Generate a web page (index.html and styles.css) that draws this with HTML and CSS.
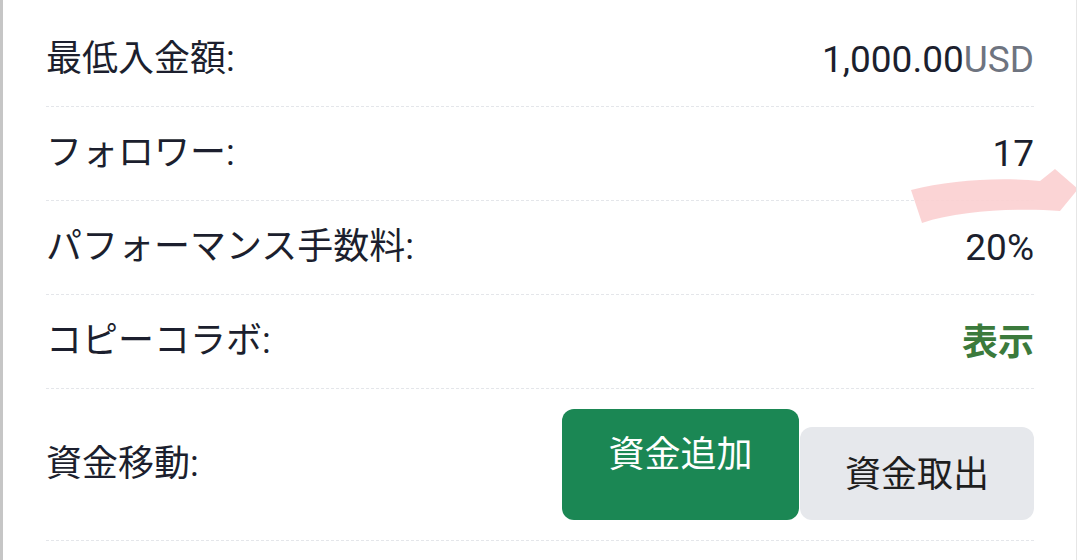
FILE: index.html
```html
<!DOCTYPE html>
<html lang="ja">
<head>
    <meta charset="UTF-8">
    <title>コピートレード詳細</title>
    <link rel="stylesheet" href="styles.css">
</head>
<body>
    <div class="card">
        <div class="row">
            <span class="label">最低入金額:</span>
            <span class="value">1,000.00<span class="unit">USD</span></span>
        </div>
        <div class="row">
            <span class="label">フォロワー:</span>
            <span class="value">17</span>
        </div>
        <div class="row">
            <span class="label">パフォーマンス手数料:</span>
            <span class="value">20%</span>
        </div>
        <div class="row">
            <span class="label">コピーコラボ:</span>
            <span class="value link">表示</span>
        </div>
        <div class="row row-funds">
            <span class="label">資金移動:</span>
            <div class="btn-group">
                <button class="btn btn-add">資金追加</button>
                <button class="btn btn-out">資金取出</button>
            </div>
        </div>

        <!-- 手書きのマーカー -->
        <svg class="marker" width="180" height="70" viewBox="900 160 180 70">
            <path d="M911,190 C950,180 1000,177 1040,181 L1055,169 L1078,189 L1060,211 C1020,208 960,210 922,223 Z" fill="#fbcfd0" opacity="0.9"/>
        </svg>
    </div>
</body>
</html>
```

FILE: styles.css
```css
body {
    margin: 0;
    background: #fff;
    font-family: Roboto, "Noto Sans CJK JP", sans-serif;
    color: #1c1f2e;
}
.card {
    position: relative;
    width: 1077px;
    height: 560px;
    box-sizing: border-box;
    border-left: 3px solid #c6c6c6;
    border-right: 1px solid #e6e6e6;
    padding: 13px 42px 0 43px;
    overflow: hidden;
}
.row {
    display: flex;
    align-items: center;
    justify-content: space-between;
    height: 93px;
    border-bottom: 1px dashed #e4e6ea;
}
.label {
    font-size: 36px;
    margin-bottom: 9px;
}
.value {
    font-size: 37px;
}
.unit {
    color: #6e7480;
}
.link {
    color: #3b7a3c;
    font-weight: bold;
    font-size: 36px;
    margin-bottom: 6px;
}
.row-funds {
    height: 151px;
}
.btn-group {
    display: flex;
    align-items: flex-end;
    gap: 1px;
}
.btn {
    border: none;
    border-radius: 12px;
    font-family: Roboto, "Noto Sans CJK JP", sans-serif;
    font-size: 36px;
    cursor: pointer;
}
.btn-add {
    width: 237px;
    height: 111px;
    padding: 0 0 28px;
    background: #1b8754;
    color: #fff;
}
.btn-out {
    width: 234px;
    height: 93px;
    padding: 0 0 6px;
    background: #e6e8ec;
    color: #1e1e1e;
}
.marker {
    position: absolute;
    left: 897px;
    top: 160px;
}
```
